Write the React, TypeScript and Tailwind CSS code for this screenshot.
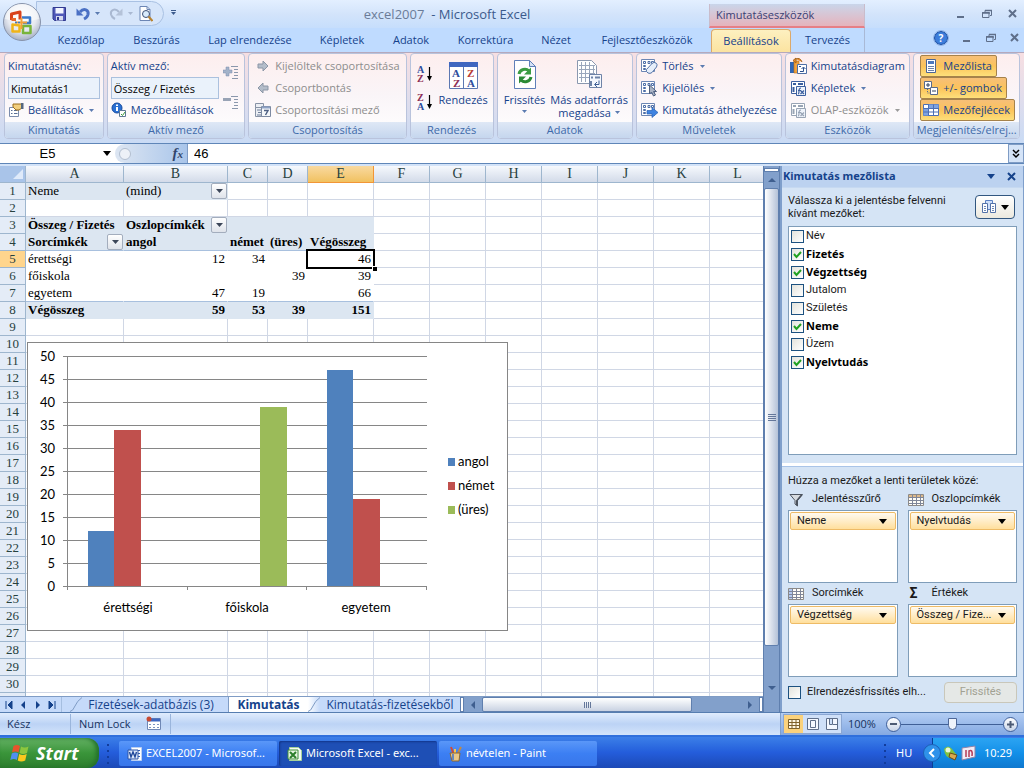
import type { ReactNode } from "react"

const TABS = [
  { label: "Kezdőlap", width: "w-[76px]" },
  { label: "Beszúrás", width: "w-[75px]" },
  { label: "Lap elrendezése", width: "w-28" },
  { label: "Képletek", width: "w-[72px]" },
  { label: "Adatok", width: "w-[66px]" },
  { label: "Korrektúra", width: "w-[83px]" },
  { label: "Nézet", width: "w-[58px]" },
  { label: "Fejlesztőeszközök", width: "w-[124px]" },
]

const COLUMNS = [
  { name: "A", width: "w-[98px]" },
  { name: "B", width: "w-[104px]" },
  { name: "C", width: "w-10" },
  { name: "D", width: "w-10" },
  { name: "E", width: "w-[66px]" },
  { name: "F", width: "w-14" },
  { name: "G", width: "w-14" },
  { name: "H", width: "w-14" },
  { name: "I", width: "w-14" },
  { name: "J", width: "w-14" },
  { name: "K", width: "w-14" },
  { name: "L", width: "w-14" },
]

const CELLS: Record<string, string> = {
  A1: "Neme", B1: "(mind)",
  A3: "Összeg / Fizetés", B3: "Oszlopcímkék",
  A4: "Sorcímkék", B4: "angol", C4: "német", D4: "(üres)", E4: "Végösszeg",
  A5: "érettségi", B5: "12", C5: "34", E5: "46",
  A6: "főiskola", D6: "39", E6: "39",
  A7: "egyetem", B7: "47", C7: "19", E7: "66",
  A8: "Végösszeg", B8: "59", C8: "53", D8: "39", E8: "151",
}

const FILTERS = ["B1", "B3", "A4"]

const FIELDS = [
  { name: "Név", checked: false },
  { name: "Fizetés", checked: true },
  { name: "Végzettség", checked: true },
  { name: "Jutalom", checked: false },
  { name: "Születés", checked: false },
  { name: "Neme", checked: true },
  { name: "Üzem", checked: false },
  { name: "Nyelvtudás", checked: true },
]

const SERIES = [
  { name: "angol", color: "#4f81bd", values: [12, 0, 47] },
  { name: "német", color: "#c0504d", values: [34, 0, 19] },
  { name: "(üres)", color: "#9bbb59", values: [0, 39, 0] },
]

/* ---------- icons ---------- */

function Svg({ size = 16, children }: { size?: number; children: ReactNode }) {
  return (
    <svg width={size} height={size} viewBox={`0 0 ${size} ${size}`} fill="none" className="shrink-0" aria-hidden="true">
      {children}
    </svg>
  )
}

function Caret({ className = "text-[#5b7bb0]" }: { className?: string }) {
  return (
    <svg width="5" height="3" viewBox="0 0 5 3" className={`shrink-0 ${className}`} aria-hidden="true">
      <path d="M0 0h5L2.500 3z" fill="currentColor" />
    </svg>
  )
}

function BigCaret({ className = "text-black" }: { className?: string }) {
  return (
    <svg width="8" height="5" viewBox="0 0 8 5" className={`shrink-0 ${className}`} aria-hidden="true">
      <path d="M0 0h8L4 5z" fill="currentColor" />
    </svg>
  )
}

function OfficeLogo() {
  return (
    <svg width="40" height="40" viewBox="0 0 40 40" fill="none" aria-hidden="true">
      <defs>
        <radialGradient id="orb" cx="50%" cy="35%" r="65%">
          <stop offset="0" stopColor="#ffffff" />
          <stop offset="0.6" stopColor="#e6e9f0" />
          <stop offset="1" stopColor="#a6b0c4" />
        </radialGradient>
      </defs>
      <circle cx="20" cy="20" r="18.500" fill="url(#orb)" stroke="#8793ab" />
      <path d="M3 17a17 15 0 0 1 34 0q-17 5-34 0z" fill="#fff" opacity=".5" />
      <g strokeLinejoin="round">
        <path d="M9.500 18v-6l8.500-2v7.500" stroke="#d8421c" strokeWidth="3" />
        <path d="M9.500 17.500H14" stroke="#e8682c" strokeWidth="3" />
        <path d="M20 15.500h8v5.500h-7" stroke="#3b79c9" strokeWidth="2.500" />
        <path d="M10.500 22.500v7h7v-6z" stroke="#f0b418" strokeWidth="2.500" />
        <path d="M21 24h7.500v7H21z" stroke="#78b43a" strokeWidth="2.500" />
        <path d="M13 20.500h12M19.500 16v11" stroke="#f2a13a" strokeWidth="2" />
        <path d="M13 20.500h6" stroke="#3b79c9" strokeWidth="1.500" strokeDasharray="2 1" />
      </g>
    </svg>
  )
}

function SaveIcon() {
  return (
    <Svg>
      <path d="M2 1.500h12.500v13H3.500L2 13z" fill="#4f58b8" stroke="#313a91" />
      <path d="M4.500 2h8v5.500h-8z" fill="#f2f5ff" />
      <path d="M5 10h7v4.500H5z" fill="#d5daee" />
      <path d="M6 11h2v3H6z" fill="#313a91" />
    </Svg>
  )
}

function UndoIcon({ flip = false }: { flip?: boolean }) {
  return (
    <Svg>
      <g transform={flip ? "translate(16 0) scale(-1 1)" : undefined}>
        <path d="M5 6C9 1.500 14 4 13 8.500c-.5 2-2 3.500-4 4.500" stroke={flip ? "#a9b8d1" : "#4a70c4"} strokeWidth={flip ? 2 : 3} />
        <path d="M1.500 2.500v7h7z" fill={flip ? "#b4c2d8" : "#4a70c4"} />
      </g>
    </Svg>
  )
}

function PreviewIcon() {
  return (
    <Svg>
      <path d="M3 .5h7l3 3v11H3z" fill="#fff" stroke="#6c86b4" />
      <path d="M10 .5v3h3" stroke="#6c86b4" />
      <circle cx="9" cy="8" r="3.500" fill="#d9ebfb" stroke="#3c4f74" />
      <path d="M11.500 10.500l4 4.500" stroke="#b88330" strokeWidth="2" />
    </Svg>
  )
}

function PropertiesIcon() {
  return (
    <Svg>
      <path d="M1.500 5.500h9v9h-9z" fill="#fff" stroke="#7b8cac" />
      <path d="M3 8.500h1.500M6 8.500h3.500M3 11.500h1.500M6 11.500h3.500" stroke="#5a6e95" />
      <path d="M5 2h9v4l-3 2H8L5 5z" fill="#f2ce7d" stroke="#9a6c1d" />
      <path d="M13 1h2.500v6H13z" fill="#55677f" />
    </Svg>
  )
}

function InfoIcon() {
  return (
    <Svg>
      <circle cx="6" cy="6" r="5" fill="#2b70d3" stroke="#174b9e" />
      <path d="M6 5v4M6 2.500v1.500" stroke="#fff" strokeWidth="2" />
      <path d="M8.500 8.500h6v6h-6z" fill="#fff" stroke="#5d7895" />
      <path d="M10 12l1.500 1.500L14 10" stroke="#3d9a3d" />
    </Svg>
  )
}

function ExpandIcon({ minus = false }: { minus?: boolean }) {
  return (
    <Svg>
      {minus ? (
        <path d="M0 4.500h8" stroke="#98a3b5" strokeWidth="3" />
      ) : (
        <path d="M0 5h3V2h3v3h3v3H6v3H3V8H0z" fill="#a3b2c9" stroke="#7d8fad" strokeWidth=".5" />
      )}
      <path d="M8 1.500h7M11 4.500h4M11 7.500h4M11 10.500h4M9 13.500h6" stroke="#8a97ac" />
    </Svg>
  )
}

function ArrowIcon({ left = false }: { left?: boolean }) {
  return (
    <Svg>
      <g transform={left ? "translate(16 0) scale(-1 1)" : undefined}>
        <path d="M3 6h5V3l5 5-5 5v-3H3z" fill="#b4bdca" stroke="#8b96a6" />
      </g>
    </Svg>
  )
}

function GroupFieldIcon() {
  return (
    <Svg>
      <path d="M.5 1.500h8v4h-8zM.5 5.500h8v9h-8z" fill="#eceff4" stroke="#8792a5" />
      <path d="M2 8h4M3 10.500h3M2 13h4" stroke="#6f7f9a" />
      <path d="M6.500 4.500h9v10h-9z" fill="#f6f8fb" stroke="#7d8aa2" />
      <path d="M7 5.500h8" stroke="#8ea2c5" strokeWidth="2" />
      <path d="M9 8.500h4L10.500 13" stroke="#4f6184" strokeWidth="1.500" />
    </Svg>
  )
}

function SortIcon({ first, second, firstColor, secondColor }: { first: string; second: string; firstColor: string; secondColor: string }) {
  return (
    <svg width="16" height="18" viewBox="0 0 16 18" aria-hidden="true">
      <g fontFamily="Liberation Serif, serif" fontSize="10" fontWeight="bold">
        <text x="0" y="8" fill={firstColor}>{first}</text>
        <text x="0" y="17" fill={secondColor}>{second}</text>
      </g>
      <path d="M12.500 2v12" stroke="#000" strokeWidth="1.200" />
      <path d="M10 11h5l-2.500 5z" fill="#000" />
    </svg>
  )
}

function SortDialogIcon() {
  return (
    <Svg size={32}>
      <path d="M2.500 3.500h28v26h-28z" fill="#fff" stroke="#5c78b2" />
      <path d="M2 3h29v5H2z" fill="#3f67c0" />
      <path d="M16.500 8v21" stroke="#5c78b2" />
      <g fontFamily="Liberation Serif, serif" fontSize="11" fontWeight="bold">
        <text x="5" y="18" fill="#2c4c9c">A</text>
        <text x="6" y="28" fill="#8d2e55">Z</text>
        <text x="20" y="18" fill="#b93a34">Z</text>
        <text x="20" y="28" fill="#2c4c9c">A</text>
      </g>
    </Svg>
  )
}

function RefreshIcon() {
  return (
    <Svg size={32}>
      <path d="M5.500 1.500h15l6 6v22h-21z" fill="#fff" stroke="#5f7fb8" />
      <path d="M20.500 1.500v6h6z" fill="#d5e2f6" stroke="#5f7fb8" />
      <path d="M10 15c1-5 7-6 10-3" stroke="#3b9c43" strokeWidth="3" />
      <path d="M22 8.500v7h-7z" fill="#3b9c43" />
      <path d="M22 18c-1 5-7 6-10 3" stroke="#2b8a36" strokeWidth="3" />
      <path d="M10 24.500v-7h7z" fill="#2b8a36" />
    </Svg>
  )
}

function DataSourceIcon() {
  return (
    <Svg size={32}>
      <path d="M4.500 1.500h14l5 5v18h-19z" fill="#fff" stroke="#8a98af" />
      <path d="M6 6.500h16M6 10.500h16M6 14.500h16M6 18.500h10M8.500 3v20M12.500 3v20M16.500 3v20M20.500 6v11" stroke="#9aa7bc" />
      <path d="M16.500 15.500h12v13h-12z" fill="#f5f8fd" stroke="#6e83a7" />
      <path d="M18 18.500h2M22 18.500h5M18 22v5" stroke="#6e83a7" strokeWidth="2" />
      <path d="M22 25.500h4v-4M24 23l-2.500 2.500L24 28" stroke="#3f5f95" />
    </Svg>
  )
}

function PivotIcon({ overlay }: { overlay: ReactNode }) {
  return (
    <Svg size={18}>
      <path d="M1.500 2.500h13v12h-13z" fill="#fff" stroke="#6c86b4" />
      <path d="M3.500 4.500h2v2h-2zM8 4.500h2v2H8zM11.500 4.500h2v2h-2zM3.500 8.500h2v1h-2zM3.500 11.500h2v1h-2z" stroke="#4c6da6" />
      {overlay}
    </Svg>
  )
}

const eraser = <path d="M6.500 12.500l5.500-6q2-2 4-.5t.5 4L12 15.500q-2 1.500-4 .5-2.500-1.500-1.500-3.500z" fill="#e6eefa" stroke="#5674a8" />
const pointer = <path d="M9.500 6v9l2-2 2 4 2-1-2-3.500h3z" fill="#aab4c6" stroke="#4e5f7e" />
const mover = <path d="M7 9.500h5V6.500l6 5-6 5v-3.500H7z" fill="#3f83e0" stroke="#2560b4" strokeWidth=".7" />

function PivotChartIcon() {
  return (
    <Svg size={18}>
      <path d="M1 5h4v11H1z" fill="#2f66b5" />
      <path d="M5 4h5v12H5z" fill="#f0a13d" stroke="#b56c15" strokeWidth=".6" />
      <path d="M7 2q4-2 6 3M4 3.500L7 1v5z" fill="#e88c2c" stroke="#a6661c" />
      <path d="M8.500 7.500h9v9h-9z" fill="#fff" stroke="#4f6fa5" />
      <path d="M11 14.500h3.500v-4M12.500 12l2-2 2 2M10 9.500h2" stroke="#2c4f8e" />
    </Svg>
  )
}

function FormulaIcon({ muted = false }: { muted?: boolean }) {
  const color = muted ? "#98a4b5" : "#3b5f9f"
  return (
    <Svg size={18}>
      <path d="M2.500 2.500h13v12h-13z" fill="#fff" stroke={color} />
      <path d="M4 5h3M9 5h5M4.500 8v5" stroke={color} strokeWidth="2" />
      <path d="M7.500 7.500h9v9h-9z" fill="#eef3fb" stroke={color} />
      <path d="M12 9q-2 0-2 3t-1 3M9 11.500h3M11.500 11.500l3.500 3.500M15 11.500L11.500 15" stroke={color} strokeWidth="1.200" />
    </Svg>
  )
}

function FieldListIcon() {
  return (
    <Svg>
      <path d="M3.500 1.500h9v13h-9z" fill="#fff" stroke="#4b6595" />
      <path d="M5 3h6v3H5z" fill="#4d78bd" />
      <path d="M5 8.500h6M5 10.500h6M5 12.500h6" stroke="#6a80a8" />
    </Svg>
  )
}

function PlusMinusIcon() {
  return (
    <Svg>
      <path d="M1.500 1.500h7v7h-7z" fill="#fff" stroke="#596a8a" />
      <path d="M3 5h4M5 3v4" stroke="#30405e" />
      <path d="M7.500 7.500h7v7h-7z" fill="#fff" stroke="#596a8a" />
      <path d="M9 11h4" stroke="#30405e" />
      <path d="M4.500 9v4H7" stroke="#596a8a" strokeDasharray="1 1" />
    </Svg>
  )
}

function GridIcon() {
  return (
    <Svg>
      <path d="M.5 2.500h15v11H.5z" fill="#fff" stroke="#4c6fb5" />
      <path d="M5.500 2.500h10V6h-10zM.5 6.500h5v7h-5z" fill="#7fa3e0" />
      <path d="M.5 6.500h15M.5 10h15M5.500 2.500v11M10.500 2.500v11" stroke="#4c6fb5" />
    </Svg>
  )
}

function LabelGridIcon({ rows = false }: { rows?: boolean }) {
  return (
    <Svg>
      <path d="M.5 2.500h15v11H.5z" fill="#fffdf6" stroke="#8d8a86" />
      {rows ? <path d="M1 3h4v10H1z" fill="#b4caf0" /> : <path d="M1 3h14v3H1z" fill="#dcb98a" />}
      <path d="M.5 5.500h15M.5 8.500h15M.5 11.500h15M4.500 2.500v11M8.500 2.500v11M12.500 2.500v11" stroke="#7f8698" />
    </Svg>
  )
}

function FunnelIcon() {
  return (
    <Svg>
      <path d="M2 2.500h12.500l-5 6v5.500l-2.500-2V8.500z" fill="#d7dbdf" stroke="#4d5560" />
      <path d="M9.500 14l-1.500-1V8.500L12.500 3h2L9.500 9z" fill="#4b525d" />
    </Svg>
  )
}

function WindowsFlag() {
  return (
    <svg width="20" height="18" viewBox="0 0 20 18" className="shrink-0" aria-hidden="true">
      <path d="M3.500 2q3.500-2 6.500 0L8.500 8.500q-3-2-6.500 0z" fill="#e8542c" />
      <path d="M11 2.500q3.500 2 7.500 0L17 9q-4 2-7.500 0z" fill="#8cc63e" />
      <path d="M1.800 9.500q3.500-2 6.500 0L6.800 16q-3-2-6.500 0z" fill="#4f8ff0" />
      <path d="M9.200 10q3.500 2 7.500 0l-1.500 6.500q-4 2-7.500 0z" fill="#fbc81e" />
    </svg>
  )
}

function WordIcon() {
  return (
    <Svg>
      <path d="M4.500 1.500h10v13h-10z" fill="#fff" stroke="#bcd0f2" />
      <path d="M10 4.500h3M11 7.500h2M11 10.500h2" stroke="#3563b5" />
      <path d="M1 4h10v9H1z" fill="#dfe9fb" stroke="#2c55a6" />
      <path d="M2.500 6l1.500 5 2-5 2 5 1.500-5" stroke="#1f4799" strokeWidth="1.400" />
    </Svg>
  )
}

function ExcelIcon() {
  return (
    <Svg>
      <path d="M2.500 1.500h9l3 3v10h-12z" fill="#f4fbf2" stroke="#a6d19a" />
      <path d="M1 4h10v9H1z" fill="#e8f6e3" stroke="#3d8d38" />
      <path d="M3 6l6 6M9 6l-6 6" stroke="#2c7e2b" strokeWidth="2" />
    </Svg>
  )
}

function PaintIcon() {
  return (
    <Svg>
      <path d="M4 1l3 8" stroke="#d54a32" strokeWidth="2" />
      <path d="M8 3v6" stroke="#f6c64a" strokeWidth="2" />
      <path d="M14 1l-4 8" stroke="#c08a45" strokeWidth="2" />
      <path d="M3 7h10l-1 8H5z" fill="#e8c788" stroke="#8c6733" />
      <path d="M6 8v6" stroke="#3f72cc" strokeWidth="1.500" />
    </Svg>
  )
}

function MinimizeGlyph() {
  return (
    <Svg size={10}>
      <path d="M1 8h7" stroke="#5f6f8a" strokeWidth="2" />
    </Svg>
  )
}

function RestoreGlyph() {
  return (
    <Svg size={10}>
      <path d="M3 3V1.500h6.500v5H8" stroke="#5f6f8a" />
      <path d="M.5 3.500h6.500v5H.5z" stroke="#5f6f8a" />
      <path d="M0 4h8M3 1.500h7" stroke="#5f6f8a" strokeWidth="1.500" />
    </Svg>
  )
}

function CloseGlyph({ color = "#5f6f8a" }: { color?: string }) {
  return (
    <Svg size={10}>
      <path d="M1 1l7 7M8 1L1 8" stroke={color} strokeWidth="2" />
    </Svg>
  )
}

/* ---------- title bar and ribbon ---------- */

function WindowButtons() {
  return (
    <>
      <button aria-label="Kis méret"><MinimizeGlyph /></button>
      <button aria-label="Előző méret"><RestoreGlyph /></button>
      <button aria-label="Bezárás"><CloseGlyph /></button>
    </>
  )
}

function TitleBar() {
  return (
    <header className="relative bg-[#bfdbff]">
      <div className="flex h-7 bg-linear-to-b from-[#e3efff] via-[#d3e4fb] to-[#c6defc]">
        <div className="w-[185px] shrink-0 pl-9 pt-px">
          <div className="flex h-[25px] w-32 items-center rounded-r-full border border-[#a9c1e3] bg-[#d6e5fa] pl-3.5">
            <button aria-label="Mentés" className="mr-2"><SaveIcon /></button>
            <button aria-label="Visszavonás" className="mr-1"><UndoIcon /></button>
            <button aria-label="Visszavonás lista" className="mr-2"><Caret /></button>
            <button aria-label="Mégis" className="mr-1"><UndoIcon flip /></button>
            <button aria-label="Mégis lista" className="mr-1"><Caret className="text-[#a9b8d1]" /></button>
            <button aria-label="Nyomtatási kép"><PreviewIcon /></button>
          </div>
        </div>
        <h1 className="relative flex-1 pt-1.5 text-center text-[13px] leading-4 text-[#3b5a8c]">
          <button aria-label="Gyorselérési eszköztár testreszabása" className="absolute -left-3.5 top-2.5">
            <span className="mx-auto mb-px block h-px w-[5px] bg-[#3b5a8c]" />
            <Caret className="text-[#3b5a8c]" />
          </button>
          <span className="text-[#6b7c98]">excel2007</span>&nbsp; - Microsoft Excel
        </h1>
        <div className="mt-1 w-[156px] shrink-0 border-x border-b-2 border-x-[#c9bccb] border-b-[#e67f86] bg-linear-to-b from-[#c9d5ea] to-[#e5b3bc] pl-1.5 pt-[3px] text-[11px] leading-4 text-[#3a3f73]">
          Kimutatáseszközök
        </div>
        <div className="flex w-[159px] shrink-0 items-center justify-end gap-4 pr-1.5">
          <WindowButtons />
        </div>
      </div>
      <nav className="flex h-6 items-end pl-[43px] text-[11px] text-[#15428b]">
        {TABS.map((tab) => (
          <button key={tab.label} className={`${tab.width} h-6 whitespace-nowrap`}>{tab.label}</button>
        ))}
        <button className="ml-0.5 h-[23px] w-20 rounded-t-sm border border-b-0 border-[#dca96a] bg-linear-to-b from-[#fdf0c0] to-[#fbe3a0]">
          Beállítások
        </button>
        <button className="h-6 w-[74px] border-r border-[#a9b9d6]">Tervezés</button>
        <div className="ml-auto flex h-5 items-center gap-3.5 self-center pb-1 pr-1">
          <button aria-label="Súgó" className="flex h-3.5 w-3.5 items-center justify-center rounded-full border border-[#174b9e] bg-[#3c7ddb] text-[10px] font-bold leading-3 text-white outline-1 outline-[#8fb3e8]">?</button>
          <WindowButtons />
        </div>
      </nav>
      <button aria-label="Office gomb" className="absolute left-0.5 top-0.5">
        <OfficeLogo />
      </button>
    </header>
  )
}

function Group({ title, children }: { title: string; children: ReactNode }) {
  return (
    <section className="flex min-w-0 flex-col overflow-hidden rounded-sm border border-[#b9c3dc] bg-linear-to-b from-[#fdeeee] via-[#faf5f8] to-white">
      <div className="h-[68px] px-[3px] pt-px">{children}</div>
      <h2 className="h-4 truncate bg-linear-to-b from-[#dfe8f6] to-[#c5d6ee] text-center text-[11px] leading-4 text-[#3e6aaa]">{title}</h2>
    </section>
  )
}

function RibbonButton({ icon, label, caret, disabled }: { icon: ReactNode; label: string; caret?: boolean; disabled?: boolean }) {
  return (
    <button disabled={disabled} className="flex h-[22px] items-center gap-1 whitespace-nowrap text-[11px] text-[#15428b] disabled:text-[#8d8d8d]">
      {icon}
      <span>{label}</span>
      {caret && <Caret className={disabled ? "ml-0.5 text-[#9a9a9a]" : "ml-0.5 text-[#5b7bb0]"} />}
    </button>
  )
}

function ToggleButton({ icon, label }: { icon: ReactNode; label: string }) {
  return (
    <button aria-pressed="true" className="flex h-[22px] items-center gap-1 whitespace-nowrap rounded-xs border border-[#a5824b] bg-linear-to-b from-[#f6bf78] via-[#fbc35a] to-[#fddf7a] pl-0.5 pr-1 text-[11px] text-[#15428b]">
      {icon}
      {label}
    </button>
  )
}

function RibbonField({ label, id, value }: { label: string; id: string; value: string }) {
  return (
    <div className="flex w-full flex-col">
      <label htmlFor={id} className="h-[22px] text-[11px] leading-[22px] text-[#15428b]">{label}</label>
      <input id={id} defaultValue={value} className="h-[22px] w-full border border-[#abc1de] bg-[#eaf2fb] px-0.5 text-[11px] text-black" />
    </div>
  )
}

function Ribbon() {
  return (
    <div className="grid grid-cols-[100fr_139fr_159fr_84fr_137fr_146fr_126fr_107fr] gap-[3px] border-t border-[#b5a9bd] bg-linear-to-b from-[#f7dfe2] to-[#c9dbf5] px-1 pb-1">
      <Group title="Kimutatás">
        <RibbonField label="Kimutatásnév:" id="pivot-name" value="Kimutatás1" />
        <RibbonButton icon={<PropertiesIcon />} label="Beállítások" caret />
      </Group>
      <Group title="Aktív mező">
        <div className="flex gap-1">
          <div className="min-w-0 flex-1">
            <RibbonField label="Aktív mező:" id="active-field" value="Összeg / Fizetés" />
            <RibbonButton icon={<InfoIcon />} label="Mezőbeállítások" />
          </div>
          <div className="flex w-[18px] flex-col gap-3.5 pt-2.5">
            <button aria-label="Mező kibontása"><ExpandIcon /></button>
            <button aria-label="Mező összecsukása"><ExpandIcon minus /></button>
          </div>
        </div>
      </Group>
      <Group title="Csoportosítás">
        <div className="pl-[3px]">
          <RibbonButton icon={<ArrowIcon />} label="Kijelöltek csoportosítása" disabled />
          <RibbonButton icon={<ArrowIcon left />} label="Csoportbontás" disabled />
          <RibbonButton icon={<GroupFieldIcon />} label="Csoportosítási mező" disabled />
        </div>
      </Group>
      <Group title="Rendezés">
        <div className="flex gap-1">
          <div className="flex flex-col gap-2.5 pl-[3px] pt-2.5">
            <button aria-label="Növekvő"><SortIcon first="A" second="Z" firstColor="#2c4c9c" secondColor="#8d2e55" /></button>
            <button aria-label="Csökkenő"><SortIcon first="Z" second="A" firstColor="#8d2e55" secondColor="#2c4c9c" /></button>
          </div>
          <button className="flex flex-1 flex-col items-center pt-1 text-[11px] leading-[13px] text-[#15428b]">
            <SortDialogIcon />
            <span className="pt-0.5">Rendezés</span>
          </button>
        </div>
      </Group>
      <Group title="Adatok">
        <div className="flex justify-between text-[11px] leading-[13px] text-[#15428b]">
          <button className="flex w-12 flex-col items-center pt-1">
            <RefreshIcon />
            <span className="pb-1 pt-0.5">Frissítés</span>
            <Caret />
          </button>
          <button className="flex w-20 flex-col items-center whitespace-nowrap pt-1">
            <DataSourceIcon />
            <span className="pt-0.5">Más adatforrás</span>
            <span className="flex items-center gap-1">megadása <Caret /></span>
          </button>
        </div>
      </Group>
      <Group title="Műveletek">
        <RibbonButton icon={<PivotIcon overlay={eraser} />} label="Törlés" caret />
        <RibbonButton icon={<PivotIcon overlay={pointer} />} label="Kijelölés" caret />
        <RibbonButton icon={<PivotIcon overlay={mover} />} label="Kimutatás áthelyezése" />
      </Group>
      <Group title="Eszközök">
        <RibbonButton icon={<PivotChartIcon />} label="Kimutatásdiagram" />
        <RibbonButton icon={<FormulaIcon />} label="Képletek" caret />
        <RibbonButton icon={<FormulaIcon muted />} label="OLAP-eszközök" caret disabled />
      </Group>
      <Group title="Megjelenítés/elrej...">
        <div className="flex flex-col items-start pl-[3px]">
          <ToggleButton icon={<FieldListIcon />} label="Mezőlista" />
          <ToggleButton icon={<PlusMinusIcon />} label="+/- gombok" />
          <ToggleButton icon={<GridIcon />} label="Mezőfejlécek" />
        </div>
      </Group>
    </div>
  )
}

function FormulaBar() {
  return (
    <div className="border-b-2 border-[#d3e3f8]">
      <div className="flex h-[21px] border-y border-[#5f86b8] bg-white font-['Liberation_Sans',Arial,sans-serif] text-[13px]">
        <div className="flex w-[115px] items-center pr-1">
          <input aria-label="Névmező" defaultValue="E5" className="w-full min-w-0 flex-1 pr-2 text-center" />
          <button aria-label="Névlista"><BigCaret /></button>
        </div>
        <div className="flex w-[73px] items-center justify-between rounded-l-full border-r border-[#7f9cc5] bg-linear-to-r from-[#dde6f2] to-[#a9c5ea] pl-1 pr-1">
          <span className="h-3 w-3 rounded-full border border-[#b3bfd0] bg-[#edf1f7]" />
          <button aria-label="Függvény beszúrása" className="font-['Liberation_Serif',serif] text-[15px] font-bold italic leading-4 text-[#31456b]">
            f<span className="text-[11px]">x</span>
          </button>
        </div>
        <input aria-label="Szerkesztőléc" defaultValue="46" className="min-w-0 flex-1 px-1.5" />
        <button aria-label="Szerkesztőléc kibontása" className="flex w-4 items-center justify-center border border-[#7f9cc5] bg-[#d5e4f8]">
          <Svg size={10}>
            <path d="M2 1l3 3 3-3M2 5l3 3 3-3" stroke="#000" strokeWidth="1.500" />
          </Svg>
        </button>
      </div>
    </div>
  )
}

/* ---------- worksheet ---------- */

function Cell({ column, row }: { column: string; row: number }) {
  const id = `${column}${row}`
  const text = CELLS[id]
  const inPivot = "ABCDE".includes(column) && row >= 3 && row <= 8
  const inFilter = "AB".includes(column) && row === 1
  const shaded = inFilter || (inPivot && [3, 4, 8].includes(row))
  const bold = inPivot && [3, 4, 8].includes(row)
  const numeric = row > 4 && column !== "A"

  let border = "border-[#d0d7e5]"
  if (inPivot || inFilter) border = "border-[#dce6f1]"
  if (inPivot && row > 4 && row < 8) border = "border-white"
  if (inPivot && (row === 4 || row === 7)) border = `border-b-[#a8c0de] ${row === 4 ? "border-r-[#dce6f1]" : "border-r-white"}`

  return (
    <td className={`relative h-[17px] border-b border-r p-0 ${border} ${shaded ? "bg-[#dce6f1]" : "bg-white"}`}>
      <div className={`flex h-4 items-center whitespace-nowrap px-0.5 leading-4 ${bold ? "font-bold" : ""} ${numeric ? "justify-end" : "justify-between"}`}>
        {text}
        {FILTERS.includes(id) && (
          <button aria-label={`Szűrő: ${text}`} className="-mr-0.5 flex h-4 w-4 shrink-0 items-center justify-center rounded-xs border border-[#a3adbd] bg-linear-to-b from-white to-[#dfe3ea]">
            <svg width="7" height="4" viewBox="0 0 7 4" aria-hidden="true"><path d="M0 0h7L3.500 4z" fill="#3c4658" /></svg>
          </button>
        )}
      </div>
      {id === "E5" && (
        <span className="absolute -bottom-0.5 -left-0.5 -right-0.5 -top-0.5 z-10 border-2 border-black">
          <span className="absolute -bottom-1 -right-1 h-[5px] w-[5px] border-l border-t border-white bg-black" />
        </span>
      )}
    </td>
  )
}

function PivotChart() {
  const left = 40
  const base = 244
  const unit = 4.6
  const group = 120
  const bar = 26
  return (
    <svg width="481" height="289" viewBox="0 0 481 289" className="absolute left-[27px] top-[176px] z-20 font-[Lato,'Open_Sans',sans-serif] text-[13px]" role="img" aria-label="Kimutatásdiagram">
      <rect x="0.500" y="0.500" width="480" height="288" fill="#fff" stroke="#868686" />
      {Array.from({ length: 11 }, (_, i) => i * 5).map((tick) => (
        <g key={tick}>
          <path d={`M36 ${base - tick * unit + 0.5}H400`} stroke="#868686" shapeRendering="crispEdges" />
          <text x="28" y={base - tick * unit + 5} textAnchor="end">{tick}</text>
        </g>
      ))}
      {SERIES.map((series, s) =>
        series.values.map((value, i) => (
          <rect
            key={`${s}-${i}`}
            x={left + 21 + i * group - (i === 2 ? 1 : 0) + s * bar}
            y={base - Math.round(value * unit)}
            width={s === 0 ? bar : bar + 1}
            height={Math.round(value * unit)}
            fill={series.color}
          />
        )),
      )}
      <path d={`M40.500 14V${base + 4}M160.500 ${base}v4M279.500 ${base}v4M399.500 ${base}v4`} stroke="#868686" />
      {["érettségi", "főiskola", "egyetem"].map((name, i) => (
        <text key={name} x={101 + i * 119} y="270" textAnchor="middle">{name}</text>
      ))}
      {SERIES.map((series, s) => (
        <g key={series.name}>
          <rect x="421" y={116 + s * 24} width="7" height="8" fill={series.color} />
          <text x="431" y={124 + s * 24}>{series.name}</text>
        </g>
      ))}
    </svg>
  )
}

function Sheet() {
  return (
    <div className="relative overflow-hidden bg-white font-['Liberation_Serif','Times_New_Roman',serif] text-[13px] text-black">
      <table className="w-[762px] table-fixed border-separate border-spacing-0">
        <thead>
          <tr className="text-sm leading-4 text-[#27413e]">
            <th className="h-[17px] w-[26px] border-b border-r border-[#9eb6ce] bg-[#a9c4e9] p-0">
              <svg width="10" height="10" viewBox="0 0 10 10" className="ml-auto mr-0.5" aria-hidden="true"><path d="M10 0v10H0z" fill="#dfeafa" /></svg>
            </th>
            {COLUMNS.map((column) => (
              <th
                key={column.name}
                className={`${column.width} h-[17px] border-b border-r p-0 font-normal ${
                  column.name === "E"
                    ? "border-[#f29536] bg-linear-to-b from-[#f9d99f] to-[#f1c15f]"
                    : "border-[#9eb6ce] bg-linear-to-b from-[#f6f9fd] to-[#d3dbe9]"
                }`}
              >
                {column.name}
              </th>
            ))}
          </tr>
        </thead>
        <tbody>
          {Array.from({ length: 30 }, (_, i) => i + 1).map((row) => (
            <tr key={row}>
              <th className={`h-[17px] border-b border-r border-[#9eb6ce] p-0 font-normal leading-4 text-[#27413e] ${row === 5 ? "bg-[#ffd58d]" : "bg-[#e4ecf7]"}`}>
                {row}
              </th>
              {COLUMNS.map((column) => (
                <Cell key={column.name} column={column.name} row={row} />
              ))}
            </tr>
          ))}
          <tr>
            <td className="h-[3px] border-r border-[#9eb6ce] bg-[#e4ecf7] p-0" />
            {COLUMNS.map((column) => (
              <td key={column.name} className="h-[3px] border-r border-[#d0d7e5] p-0" />
            ))}
          </tr>
        </tbody>
      </table>
      <PivotChart />
    </div>
  )
}

function TabSlant() {
  return (
    <svg width="12" height="15" viewBox="0 0 12 15" className="shrink-0" aria-hidden="true">
      <path d="M0 14.500Q3 14 5 9T12 .5" fill="none" stroke="#7f9cc5" />
    </svg>
  )
}

function SheetTabs() {
  return (
    <div className="flex h-4 border-t border-[#7f9cc5] bg-[#c5dafa] text-xs text-[#15428b]">
      <div className="flex w-[62px] shrink-0 items-center justify-around border-r border-[#a5bee0] px-0.5">
        <button aria-label="Első lap"><Svg size={8}><path d="M1 0v8M7 0v8L3 4z" fill="#15428b" stroke="#15428b" /></Svg></button>
        <button aria-label="Előző lap"><Svg size={8}><path d="M6 0v8L2 4z" fill="#15428b" /></Svg></button>
        <button aria-label="Következő lap"><Svg size={8}><path d="M2 0v8l4-4z" fill="#15428b" /></Svg></button>
        <button aria-label="Utolsó lap"><Svg size={8}><path d="M7 0v8M1 0v8l4-4z" fill="#15428b" stroke="#15428b" /></Svg></button>
      </div>
      <div className="flex w-[166px] shrink-0 pl-2 pr-2">
        <TabSlant />
        <button className="flex-1 whitespace-nowrap leading-[15px]">Fizetések-adatbázis (3)</button>
      </div>
      <button className="w-20 shrink-0 border-l border-[#7f9cc5] bg-white font-bold leading-[15px]">Kimutatás</button>
      <div className="flex w-[152px] shrink-0 bg-linear-to-r from-white from-0% to-[#c5dafa] to-8%">
        <TabSlant />
        <button className="flex-1 whitespace-nowrap leading-[15px]">Kimutatás-fizetésekből</button>
      </div>
      <div className="flex min-w-0 flex-1 items-stretch bg-[#82a0cb]">
        <span className="w-1 border border-[#5f7fae] bg-white" />
        <button aria-label="Görgetés balra" className="flex w-[18px] items-center justify-center"><Svg size={8}><path d="M6 0v8L2 4z" fill="#3f5f8f" /></Svg></button>
        <div className="flex w-[210px] items-center justify-center gap-px rounded-xs border border-[#5f7fae] bg-linear-to-b from-white to-[#c9d2e2]">
          <span className="h-1.5 w-px bg-[#64779a]" />
          <span className="h-1.5 w-px bg-[#64779a]" />
          <span className="h-1.5 w-px bg-[#64779a]" />
          <span className="h-1.5 w-px bg-[#64779a]" />
        </div>
        <button aria-label="Görgetés jobbra" className="ml-auto flex w-[18px] items-center justify-center"><Svg size={8}><path d="M2 0v8l4-4z" fill="#3f5f8f" /></Svg></button>
        <span className="w-1 border border-[#5f7fae] bg-white" />
      </div>
    </div>
  )
}

function VerticalScrollbar() {
  return (
    <div className="flex w-[17px] shrink-0 flex-col border-x border-[#5f7fae] bg-[#82a0cb]">
      <span className="mt-0.5 h-1 border border-[#5f7fae] bg-white" />
      <button aria-label="Görgetés fel" className="flex h-4 items-center justify-center"><Svg size={8}><path d="M0 6h8L4 2z" fill="#3f5f8f" /></Svg></button>
      <div className="flex flex-[457] flex-col items-center justify-center gap-px rounded-xs border border-[#5f7fae] bg-linear-to-r from-white to-[#b4c2d8]">
        <span className="h-px w-2 bg-[#64779a]" />
        <span className="h-px w-2 bg-[#64779a]" />
        <span className="h-px w-2 bg-[#64779a]" />
        <span className="h-px w-2 bg-[#64779a]" />
      </div>
      <div className="flex-[34]" />
      <button aria-label="Görgetés le" className="mb-4 flex h-4 items-center justify-center"><Svg size={8}><path d="M0 2h8L4 6z" fill="#3f5f8f" /></Svg></button>
    </div>
  )
}

/* ---------- field list pane ---------- */

function CheckBox({ id, checked }: { id: string; checked?: boolean }) {
  return (
    <span className="relative flex h-[13px] w-[13px] shrink-0">
      <input id={id} type="checkbox" defaultChecked={checked} className="peer h-[13px] w-[13px] appearance-none border border-[#1c5180] bg-linear-to-br from-[#e3e3dc] to-white" />
      <svg viewBox="0 0 13 13" className="pointer-events-none absolute inset-0 hidden peer-checked:block" aria-hidden="true">
        <path d="M3 6l2.500 3L10 4" fill="none" stroke="#21a121" strokeWidth="2" />
      </svg>
    </span>
  )
}

function DropArea({ icon, title, item }: { icon: ReactNode; title: string; item: string }) {
  return (
    <div className="min-w-0">
      <h3 className="flex h-[21px] items-center gap-2">
        <span className="w-4">{icon}</span>
        {title}
      </h3>
      <div className="h-[73px] border border-[#7f9db9] bg-white p-px">
        <button className="flex h-[18px] w-full items-center justify-between rounded-xs border border-[#eebb66] bg-linear-to-b from-[#fffaf0] to-[#ffdf9c] pl-1.5 pr-2">
          <span className="whitespace-nowrap">{item}</span>
          <BigCaret />
        </button>
      </div>
    </div>
  )
}

function FieldPane() {
  return (
    <aside className="flex w-[244px] shrink-0 flex-col border-l-2 border-r border-[#7f9fcb] bg-[#d5e4f5] font-[Roboto,Tahoma,sans-serif] text-[11px] text-[#1a1a1a]">
      <div className="flex h-[22px] items-center gap-3 border-b border-[#c6d9f1] bg-[#bcd2f0] pl-px pr-1.5">
        <h2 className="flex-1 font-['Noto_Sans',Tahoma,sans-serif] font-bold text-[#15428b]">Kimutatás mezőlista</h2>
        <button aria-label="Ablaktábla beállításai"><BigCaret className="text-[#15428b]" /></button>
        <button aria-label="Ablaktábla bezárása"><CloseGlyph color="#15428b" /></button>
      </div>
      <div className="px-1.5">
        <div className="flex h-[38px] items-center justify-between pr-0.5 leading-[13px]">
          <p className="w-44">Válassza ki a jelentésbe felvenni kívánt mezőket:</p>
          <button aria-label="Mezőlista nézete" className="flex h-6 w-10 items-center justify-center gap-1 rounded-sm border border-[#31567f] bg-linear-to-b from-white to-[#ece9df]">
            <Svg>
              <path d="M4.500 1.500h7v9h-7z" fill="#cfe0fa" stroke="#5d82c4" />
              <path d="M1.500 4.500h5v9h-5zM9.500 4.500h5v9h-5z" fill="#fff" stroke="#5573a8" />
              <path d="M3 7.500h2M3 9.500h2M11 7.500h2M11 9.500h2M3 11.500h2M11 11.500h2" stroke="#7088b5" />
            </Svg>
            <BigCaret />
          </button>
        </div>
        <ul className="h-[229px] border border-[#7f9db9] bg-white px-0.5">
          {FIELDS.map((field) => (
            <li key={field.name} className="flex h-[18px] items-center gap-px">
              <CheckBox id={`field-${field.name}`} checked={field.checked} />
              <label htmlFor={`field-${field.name}`} className={`pl-px ${field.checked ? "font-['Noto_Sans',Tahoma,sans-serif] font-bold text-black" : ""}`}>{field.name}</label>
            </li>
          ))}
        </ul>
      </div>
      <hr className="mt-2 h-1 border-0 border-b border-[#a9c4e8] bg-white" />
      <div className="px-1.5 pt-1.5">
        <p className="leading-4">Húzza a mezőket a lenti területek közé:</p>
        <div className="grid grid-cols-2 gap-x-2.5">
          <DropArea icon={<FunnelIcon />} title="Jelentésszűrő" item="Neme" />
          <DropArea icon={<LabelGridIcon />} title="Oszlopcímkék" item="Nyelvtudás" />
          <DropArea icon={<LabelGridIcon rows />} title="Sorcímkék" item="Végzettség" />
          <DropArea icon={<span className="pl-0.5 text-sm font-bold">Σ</span>} title="Értékek" item="Összeg / Fize..." />
        </div>
        <div className="flex h-[30px] items-center">
          <CheckBox id="defer-layout" />
          <label htmlFor="defer-layout" className="flex-1 pl-1.5">Elrendezésfrissítés elh...</label>
          <button disabled className="h-[21px] w-[73px] rounded-sm border border-[#c9c7ba] bg-[#e5e8e6] text-[#a1a192]">Frissítés</button>
        </div>
      </div>
    </aside>
  )
}

/* ---------- status bar and taskbar ---------- */

function StatusBar() {
  return (
    <footer className="flex h-[23px] items-center border-t border-[#567db0] bg-linear-to-b from-[#e0ecfd] via-[#bcd3f5] to-[#d3e4fb] text-[11px] text-[#15325f]">
      <span className="w-[71px] border-r border-[#9ab5dc] pl-[7px] leading-5">Kész</span>
      <span className="flex w-[100px] items-center gap-4 border-r border-[#9ab5dc] pl-2 leading-5">
        Num Lock
        <Svg>
          <path d="M1.500 2.500h13v11h-13z" fill="#fff" stroke="#6f87b5" />
          <path d="M2 4h12" stroke="#3f67c0" strokeWidth="3" />
          <path d="M3 8.500h2M7 8.500h2M11 8.500h2M3 11.500h2M7 11.500h2M11 11.500h2" stroke="#7d94bf" />
          <circle cx="3" cy="3" r="2.500" fill="#c84a33" />
        </Svg>
      </span>
      <div className="ml-auto flex h-full w-[244px] items-center border-l border-[#7f9fcb] bg-linear-to-b from-[#b3cdf3] to-[#84a9e2] pl-0.5">
        <div className="flex h-5 border border-[#8aa6d2]">
          <button aria-label="Normál nézet" className="flex w-[19px] items-center justify-center bg-[#fbd27c]"><Svg size={14}><path d="M1.500 2.500h11v9h-11zM1.500 5.500h11M1.500 8.500h11M5 2.500v9M9 2.500v9" fill="#fff8e6" stroke="#80632a" /></Svg></button>
          <button aria-label="Lapelrendezés" className="flex w-[19px] items-center justify-center bg-[#cfe0f8]"><Svg size={14}><path d="M1.500 1.500h11v11h-11zM4.500 3.500h5v7h-5z" fill="#f4f8ff" stroke="#5f6f8a" /></Svg></button>
          <button aria-label="Oldaltörés" className="flex w-[19px] items-center justify-center bg-[#cfe0f8]"><Svg size={14}><path d="M1.500 1.500h11v11h-11zM4.500 1.500v6h3v-6M8 7.500h4.500" fill="#f4f8ff" stroke="#5f6f8a" /></Svg></button>
        </div>
        <span className="w-11 pl-1.5">100%</span>
        <button aria-label="Kicsinyítés" className="flex h-[15px] w-[15px] shrink-0 items-center justify-center rounded-full border border-[#40609a] bg-linear-to-b from-white to-[#c9d5e8]"><span className="h-0.5 w-[7px] bg-[#4d5b74]" /></button>
        <input
          type="range"
          aria-label="Nagyítás"
          defaultValue={50}
          className="h-4 min-w-0 flex-1 appearance-none bg-transparent [&::-webkit-slider-runnable-track]:h-px [&::-webkit-slider-runnable-track]:bg-[#3f5f96] [&::-webkit-slider-thumb]:-mt-1.5 [&::-webkit-slider-thumb]:h-3 [&::-webkit-slider-thumb]:w-[9px] [&::-webkit-slider-thumb]:appearance-none [&::-webkit-slider-thumb]:rounded-b-md [&::-webkit-slider-thumb]:border [&::-webkit-slider-thumb]:border-[#4d6798] [&::-webkit-slider-thumb]:bg-[#eef3fb]"
        />
        <button aria-label="Nagyítás növelése" className="mr-1.5 flex h-[15px] w-[15px] shrink-0 items-center justify-center rounded-full border border-[#40609a] bg-linear-to-b from-white to-[#c9d5e8]"><Svg size={9}><path d="M1 4.500h7M4.500 1v7" stroke="#4d5b74" strokeWidth="2" /></Svg></button>
      </div>
    </footer>
  )
}

function TaskButton({ icon, label, active }: { icon: ReactNode; label: string; active?: boolean }) {
  return (
    <button className={`flex h-[25px] w-[158px] items-center gap-[3px] rounded-xs pl-2 text-left ${active ? "bg-[#1e4fb5] shadow-[inset_1px_1px_2px_#12358a]" : "bg-linear-to-b from-[#5a97f8] via-[#3c7ff3] to-[#3876ea]"}`}>
      {icon}
      {label}
    </button>
  )
}

function TaskBar() {
  return (
    <div className="flex h-[33px] items-end border-t-2 border-[#2f6fdc] bg-linear-to-b from-[#3c7fe8] via-[#245ddb] to-[#1c49b6] font-['Noto_Sans',Tahoma,sans-serif] text-[11px] text-white">
      <button className="mr-1 flex h-[30px] w-[99px] items-center gap-1.5 rounded-r-xl bg-linear-to-b from-[#64b164] via-[#3a953a] to-[#2d7d2d] pl-2.5 font-['Open_Sans',sans-serif] text-lg font-bold italic shadow-[inset_-3px_0_4px_#23702a]">
        <WindowsFlag />
        Start
      </button>
      <span className="mb-1 ml-1 mr-2.5 flex h-5 flex-col justify-between">
        <span className="h-0.5 w-0.5 bg-[#123c9c]" />
        <span className="h-0.5 w-0.5 bg-[#123c9c]" />
        <span className="h-0.5 w-0.5 bg-[#123c9c]" />
        <span className="h-0.5 w-0.5 bg-[#123c9c]" />
      </span>
      <div className="flex gap-0.5 pb-0.5">
        <TaskButton icon={<WordIcon />} label="EXCEL2007 - Microsof..." />
        <TaskButton icon={<ExcelIcon />} label="Microsoft Excel - exc..." active />
        <TaskButton icon={<PaintIcon />} label="névtelen - Paint" />
      </div>
      <span className="mb-1 ml-auto mr-2.5 flex h-5 flex-col justify-between">
        <span className="h-0.5 w-0.5 bg-[#123c9c]" />
        <span className="h-0.5 w-0.5 bg-[#123c9c]" />
        <span className="h-0.5 w-0.5 bg-[#123c9c]" />
        <span className="h-0.5 w-0.5 bg-[#123c9c]" />
      </span>
      <span className="w-9 leading-[30px]">HU</span>
      <div className="relative flex h-[30px] w-[92px] items-center gap-0.5 border-l border-[#0b3f94] bg-linear-to-b from-[#2ba4f2] via-[#1290e9] to-[#0f78cf] pl-2.5 pr-3">
        <button aria-label="Rejtett ikonok megjelenítése" className="absolute -left-2.5 flex h-[18px] w-[18px] items-center justify-center rounded-full border border-[#1c5fb5] bg-[#2f92ea]">
          <Svg size={10}><path d="M7 1L3 5l4 4" stroke="#fff" strokeWidth="2" /></Svg>
        </button>
        <Svg>
          <path d="M1 4q4-5 8 0l4 5-5 4q-6 0-7-9z" fill="#7fc241" />
          <circle cx="5" cy="5" r="2.500" fill="#e9f7d7" />
          <path d="M7 8l7 2-2 5-6-3z" fill="#d8a94e" stroke="#6b4b16" />
        </Svg>
        <Svg>
          <path d="M1 3l13-2v11L1 15z" fill="#f2ecf6" stroke="#8f83a8" />
          <path d="M5 5v7M8 12V6q4-2 3 5" stroke="#b53a55" strokeWidth="1.500" />
        </Svg>
        <time className="ml-auto">10:29</time>
      </div>
    </div>
  )
}

export default function App() {
  return (
    <div className="flex min-h-screen flex-col overflow-hidden bg-[#bfdbff] font-['Open_Sans','Segoe_UI',sans-serif]">
      <TitleBar />
      <Ribbon />
      <FormulaBar />
      <main className="flex flex-1">
        <div className="flex min-w-0 flex-1 flex-col">
          <Sheet />
          <SheetTabs />
        </div>
        <VerticalScrollbar />
        <FieldPane />
      </main>
      <StatusBar />
      <TaskBar />
    </div>
  )
}
